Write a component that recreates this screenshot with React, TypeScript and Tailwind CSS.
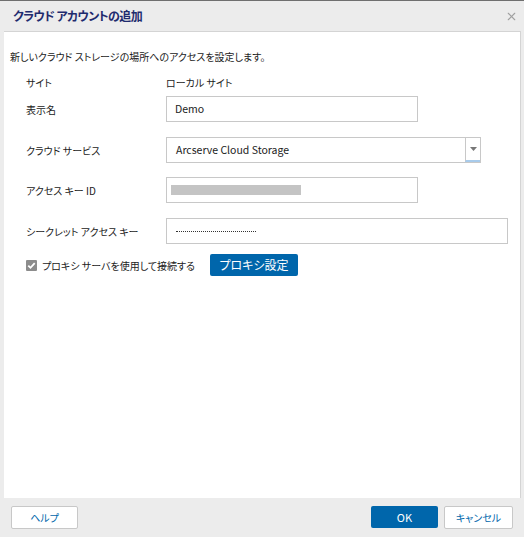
import { X } from 'lucide-react'

const font = { fontFamily: '"Noto Sans CJK JP", "Noto Sans", sans-serif' }

function Label({ children }: { children: React.ReactNode }) {
  return <div className="w-[140px] shrink-0 whitespace-nowrap text-[#222]">{children}</div>
}

export default function App() {
  return (
    <div
      className="flex h-[537px] w-[524px] flex-col overflow-hidden border-t border-[#6f6f6f] bg-[#ececec] text-[10px] text-[#222] [font-feature-settings:'palt']"
      style={font}
    >
      {/* Header */}
      <div className="flex h-[30px] shrink-0 items-center justify-between pl-[13px] pr-[6px]">
        <span className="text-[12px] font-bold tracking-[-0.6px] text-[#1f2b6e]">クラウド アカウントの追加</span>
        <X className="h-[13px] w-[13px] text-[#a0a0a0]" strokeWidth={2} />
      </div>

      {/* Body */}
      <div className="ml-[4px] mr-[3px] flex flex-1 flex-col border-t border-r border-[#d4d4d4] bg-white pl-[6px] pt-[17px]">
        <div className="leading-[16px]">新しいクラウド ストレージの場所へのアクセスを設定します。</div>

        <div className="ml-[16px] flex flex-col">
          <div className="mt-[9px] flex h-[16px] items-center">
            <Label>サイト</Label>
            <span>ローカル サイト</span>
          </div>

          <div className="mt-[6px] flex h-[26px] items-center">
            <Label>表示名</Label>
            <div className="flex h-[26px] w-[252px] items-center border border-[#c8c8c8] px-[8px] text-[10.5px]">Demo</div>
          </div>

          <div className="mt-[15px] flex h-[26px] items-center">
            <Label>クラウド サービス</Label>
            <div className="flex h-[26px] w-[315px] border border-[#c8c8c8]">
              <div className="flex flex-1 items-center px-[9px] text-[10.5px]">Arcserve Cloud Storage</div>
              <div className="flex w-[15px] items-center justify-center border-l border-[#c8c8c8] border-b-2 border-b-[#a8cbeb]">
                <svg width="7" height="4" viewBox="0 0 7 4">
                  <path d="M0 0h7L3.5 4z" fill="#777" />
                </svg>
              </div>
            </div>
          </div>

          <div className="mt-[14px] flex h-[26px] items-center">
            <Label>アクセス キー ID</Label>
            <div className="flex h-[26px] w-[252px] items-center border border-[#c8c8c8] px-[4px]">
              <div className="h-[10px] w-[130px] bg-[#c4c4c4]" />
            </div>
          </div>

          <div className="mt-[15px] flex h-[26px] items-center">
            <Label>シークレット アクセス キー</Label>
            <div className="flex h-[26px] w-[342px] items-center border border-[#c8c8c8] px-[9px]">
              <div className="h-[1px] w-[80px] border-t border-dotted border-[#333]" />
            </div>
          </div>

          <div className="mt-[10px] flex h-[22px] items-center">
            <div className="flex w-[184px] items-center gap-[5px] whitespace-nowrap">
              <svg width="11" height="11" viewBox="0 0 11 11" className="shrink-0">
                <rect width="11" height="11" rx="1" fill="#8c8c8c" />
                <path d="M2.3 5.6l2.2 2.2 4.2-4.6" stroke="#fff" strokeWidth="1.8" fill="none" />
              </svg>
              <span>プロキシ サーバを使用して接続する</span>
            </div>
            <button className="h-[22px] w-[88px] shrink-0 rounded-[2px] bg-[#0066ab] text-[12px] text-white">プロキシ設定</button>
          </div>
        </div>
      </div>

      {/* Footer */}
      <div className="flex h-[39px] shrink-0 items-center justify-between pl-[11px] pr-[11px]">
        <button className="h-[23px] w-[67px] rounded-[2px] border border-[#c8c8c8] bg-white text-[10px] text-[#0066ab]">
          ヘルプ
        </button>
        <div className="flex gap-[6px]">
          <button className="h-[22px] w-[67px] rounded-[2px] bg-[#0066ab] text-[11px] text-white">OK</button>
          <button className="h-[23px] w-[69px] rounded-[2px] border border-[#c8c8c8] bg-white text-[10px] text-[#0066ab]">
            キャンセル
          </button>
        </div>
      </div>
    </div>
  )
}
